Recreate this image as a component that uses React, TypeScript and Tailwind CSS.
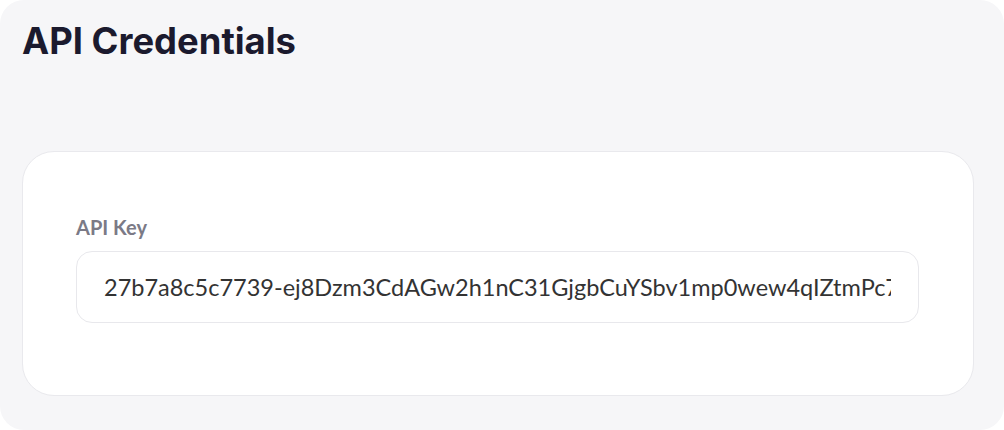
import React from "react";

export default function App() {
  const key =
    "27b7a8c5c7739-ej8Dzm3CdAGw2h1nC31GjgbCuYSbv1mp0wew4qIZtmPc7xK9LmQ2vR8sT";
  return (
    <div className="w-[1004px] h-[430px] bg-white">
      <div className="w-[1004px] h-[430px] bg-[#f6f6f8] rounded-[24px] pt-[19px] pl-[22px] pr-[30px] flex flex-col">
        <h1
          className="text-[36.4px] leading-[44px] font-bold text-[#1b1a2e]"
          style={{ fontFamily: "Inter, sans-serif" }}
        >
          API Credentials
        </h1>
        <div className="mt-[88px] h-[245px] bg-white border border-[#e9e9ed] rounded-[32px] pt-[63px] pl-[53px] pr-[54px]">
          <div
            className="text-[20px] leading-[24px] font-bold text-[#7b7a86]"
            style={{ fontFamily: "Lato, sans-serif" }}
          >
            API Key
          </div>
          <div className="mt-[12px] h-[72px] border border-[#e8e8ec] rounded-[16px] flex items-center overflow-hidden">
            <input
              readOnly
              value={key}
              className="w-full h-full pl-[27px] pr-[27px] bg-transparent outline-none text-[23.5px] text-[#333333]"
              style={{ fontFamily: "Lato, sans-serif" }}
            />
          </div>
        </div>
      </div>
    </div>
  );
}
